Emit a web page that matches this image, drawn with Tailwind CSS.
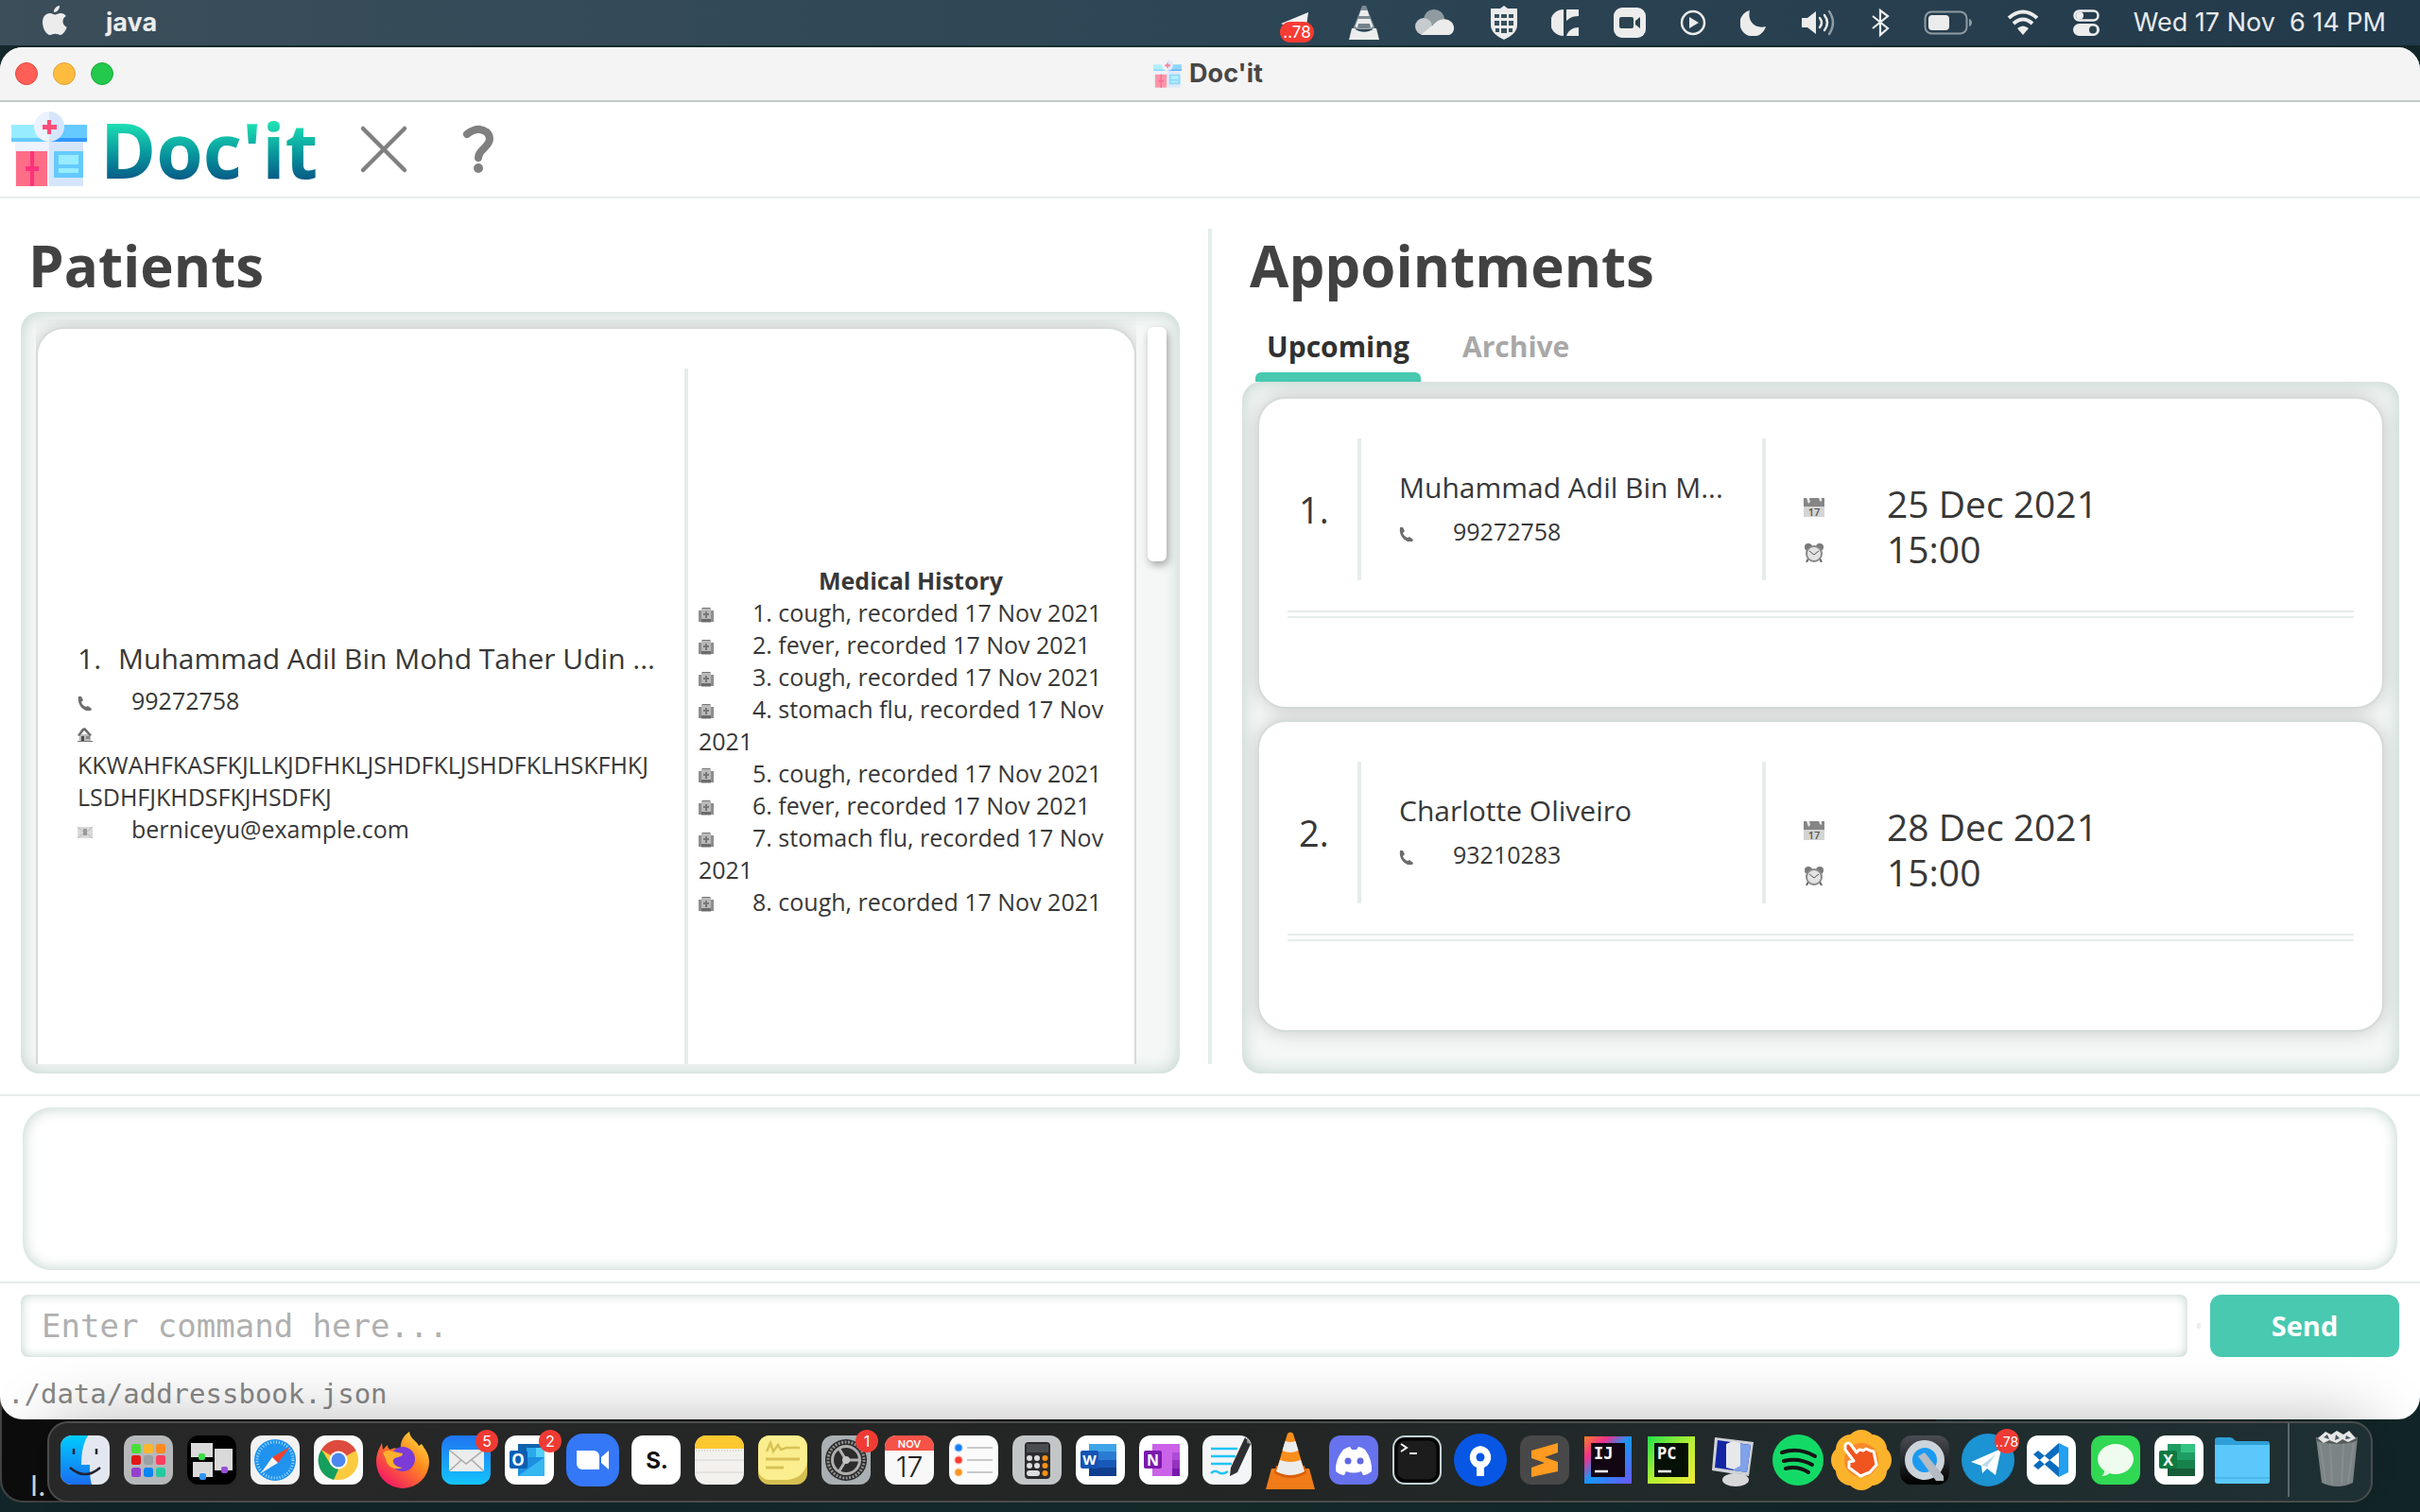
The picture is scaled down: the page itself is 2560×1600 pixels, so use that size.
<!DOCTYPE html>
<html lang="en">
<head>
<meta charset="utf-8">
<title>Doc'it</title>
<script src="https://cdn.jsdelivr.net/npm/@tailwindcss/browser@4"></script>
</head>
<body class="relative isolate flex min-h-screen flex-col overflow-x-hidden bg-linear-to-r from-[#13272a] via-[#16302f] to-[#122628] font-['Open_Sans','Noto_Sans',sans-serif] text-[#383838]">

<!-- shared glyphs -->
<svg class="hidden" aria-hidden="true">
  <symbol id="clinic" viewBox="0 0 80 80">
    <path d="M4 32h36v47H4z" fill="#ecf3fe"/><path d="M40 32h36v47H40z" fill="#d5e6fc"/>
    <path d="M0 14h40v15H0z" fill="#97edff"/><path d="M40 14h40v15H40z" fill="#65caff"/>
    <path d="M0 28h40v4H0z" fill="#65caff"/><path d="M40 28h40v4H40z" fill="#3197ff"/>
    <path d="M24 16a16 16 0 0 1 16-16v32a16 16 0 0 1-16-16z" fill="#ecf3fe"/><path d="M40 0a16 16 0 0 1 0 32z" fill="#d5e6fc"/>
    <path d="M38 9h4v5h6v5h-6v5h-4v-5h-5v-5h5z" fill="#ff4d79"/>
    <path d="M5 42h33v37H5z" fill="#ff6e86"/><path d="M20 42h4v37h-4zM15 58h14v5H15z" fill="#ff317c"/>
    <path d="M45 42h31v28H45z" fill="#65caff"/><path d="M50 46h21v10H50zM50 60h21v5H50z" fill="#97edff"/>
  </symbol>
  <symbol id="phone" viewBox="0 0 16 16"><path d="M1 1l3 0 2 4-2 2c1 3 3 4 5 5l2-1 4 3-1 2H9C3 13 0 8 1 1z" fill="#6d6d6d"/></symbol>
  <symbol id="hospital" viewBox="0 0 16 16"><path d="M0 3h3v12H0zM13 3h3v12h-3z" fill="#8e8e8e"/><path d="M3 0h10v16H3z" fill="#b9b9b9"/><path d="M4 0h8v1H4zM7 4h2v7H7zM5 6h6v2H5z" fill="#777"/><path d="M3 12h10v3H3z" fill="#6c6c6c"/></symbol>
  <symbol id="house" viewBox="0 0 16 16"><path d="M2 7h12v8H2z" fill="#bcbcbc"/><path d="M0 8l5-7 3-1 7 8-2 1-6-6-5 6z" fill="#6a6a6a"/><path d="M4 9h3v6H4z" fill="#4f4f4f"/><path d="M9 9h4v3H9z" fill="#888"/><path d="M0 14h16v1H0z" fill="#777"/></symbol>
  <symbol id="mail" viewBox="0 0 16 16"><path d="M0 3h16v12H0z" fill="#d9d9d9"/><path d="M6 5h4v7H6z" fill="#999"/><path d="M0 3l6 5M16 3l-6 5M0 15l6-5M16 15l-6-5" stroke="#bbb" fill="none"/></symbol>
  <symbol id="calendar" viewBox="0 0 22 20"><path d="M0 8h22v12H0z" fill="#d4d4d4"/><path d="M0 0h22v9H0z" fill="#858585"/><path d="M3 0h3l1 4-2 2zM16 0h3v4l-2-1z" fill="#e8e8e8"/><text x="11" y="19" text-anchor="middle" font-family="Open Sans" font-size="11" font-weight="600" fill="#555">17</text></symbol>
  <symbol id="alarm" viewBox="0 0 22 20"><path d="M5 16l-2 4M17 16l2 4" stroke="#666" stroke-width="2"/><circle cx="5" cy="4" r="4" fill="#7a7a7a"/><circle cx="17" cy="4" r="4" fill="#7a7a7a"/><circle cx="11" cy="11" r="8" fill="#e3e3e3" stroke="#8a8a8a" stroke-width="2"/><path d="M6 8l5 4 5-4" stroke="#555" fill="none"/></symbol>
</svg>

<header class="flex h-12 shrink-0 items-center bg-linear-to-r from-[#3b4e5a] via-[#2d4655] to-[#22394a] pr-9 pl-11 font-[Inter,sans-serif] text-[27px] text-white/90">
  <svg class="mb-1 h-8 w-7" viewBox="0 0 26 32" fill="#ececec"><path d="M18 0c.4 3.600-2.600 7-6 7C11.600 3.500 14.600.5 18 0zM24.800 11c-5 3-4 9.800.9 11.800C24.500 26.500 21.600 31 18.800 31c-2 0-2.800-1.200-5.300-1.200S10 31 8 31C4 31 0 24 0 17.500 0 11.500 3.800 8 7.600 8c2.400 0 4 1.400 5.600 1.400C14.700 9.400 16.500 8 19.400 8c2 0 4.200 1 5.400 3z"/></svg>
  <span class="ml-10 font-bold">java</span>
  <div class="ml-auto flex items-center gap-9">
    <svg class="h-11 w-[38px]" viewBox="0 0 38 44"><path d="M2 23L31 11l-3 22z" fill="#f2f2f2"/><rect x="1" y="21" width="36" height="22" rx="11" fill="#f83b33"/><text x="19" y="38" text-anchor="middle" font-family="Inter" font-size="17" fill="#fff">..78</text></svg>
    <svg class="h-9 w-8" viewBox="0 0 32 36"><path d="M14 0h4l10 25H4z" fill="#7d8b93"/><path d="M12.500 5h7l2 6h-11zM9.500 14h13l3 8c-5 4-14 4-19 0z" fill="#ececec"/><path d="M10 19h12l1 4c-3 2-11 2-14 0z" fill="#74838c"/><path d="M3 24h3c4 5 16 5 20 0h3l3 12H0z" fill="#ececec"/></svg>
    <svg class="h-8 w-[46px]" viewBox="0 0 46 32"><path d="M11 14a11 11 0 0 1 22-2l2 6H14z" fill="#8f9ba1"/><circle cx="11" cy="20" r="9" fill="#c5cbce"/><path d="M8 29l18-15c10-5 18 2 17 9-1 4-3 6-7 6z" fill="#ececec"/></svg>
    <svg class="h-9 w-7" viewBox="0 0 28 36"><path d="M14 0l4 3h10v17c0 8-6 12-14 16C6 32 0 28 0 20V3h10z" fill="#ececec"/><path d="M4 9h5v4H4zM11 9h6v4h-6zM19 9h5v4h-5zM4 16h5v5H4zM11 16h6v5h-6zM19 16h5v5h-5zM5 24h4v4H5zM11 24h6v5h-6zM19 24h4v4h-4z" fill="#36505d"/></svg>
    <svg class="h-8 w-[30px]" viewBox="0 0 30 32" fill="#ececec"><path d="M13 2v28A14 14 0 0 1 13 2zM16 2h13v7c-8 0-10 3-13 5zM29 30H16c2-6 7-9 13-9z"/></svg>
    <svg class="h-8 w-[34px]" viewBox="0 0 34 32"><rect width="34" height="32" rx="9" fill="#ececec"/><rect x="6" y="10" width="15" height="12" rx="2" fill="#2b4450"/><path d="M23 14l5-4v12l-5-4z" fill="#2b4450"/></svg>
    <svg class="h-8 w-7" viewBox="0 0 28 32"><circle cx="14" cy="16" r="12" fill="none" stroke="#ececec" stroke-width="2.500"/><path d="M10 10l10 6-10 6z" fill="#ececec"/></svg>
    <svg class="h-7 w-7" viewBox="0 0 28 28"><path d="M10 1c-3 12 6 20 17 17A14 14 0 1 1 10 1z" fill="#ececec"/></svg>
    <svg class="h-7 w-[38px]" viewBox="0 0 38 28"><path d="M1 9h6l9-7v24l-9-7H1z" fill="#ececec"/><path d="M20 9q4 5 0 10M25 6q6 8 0 16" fill="none" stroke="#ececec" stroke-width="2.500" stroke-linecap="round"/><path d="M30 2q8 12 0 24" fill="none" stroke="#8f9ba1" stroke-width="2.500" stroke-linecap="round"/></svg>
    <svg class="h-8 w-5" viewBox="0 0 20 32"><path d="M2 9l16 13-8 7V3l8 6L2 22" fill="none" stroke="#ececec" stroke-width="2.200"/></svg>
    <svg class="h-7 w-[52px]" viewBox="0 0 52 28"><rect x="1.500" y="2.500" width="44" height="23" rx="7" fill="none" stroke="#8f9ba1" stroke-width="2"/><rect x="5" y="6" width="22" height="16" rx="4" fill="#ececec"/><path d="M48 10c4 1 4 7 0 8z" fill="#8f9ba1"/></svg>
    <svg class="h-7 w-[34px]" viewBox="0 0 34 28"><path d="M2 9q15-13 30 0M7 15q10-9 20 0" fill="none" stroke="#ececec" stroke-width="4"/><path d="M11 20q6-5 12 0l-6 7z" fill="#ececec"/></svg>
    <svg class="h-7 w-7" viewBox="0 0 28 28"><rect x="1.500" y="1.500" width="25" height="10" rx="5" fill="none" stroke="#ececec" stroke-width="2.500"/><circle cx="7" cy="6.500" r="4" fill="#ececec"/><rect y="15" width="28" height="13" rx="6.500" fill="#ececec"/><circle cx="21" cy="21.500" r="4" fill="#2b4450"/></svg>
    <time class="whitespace-pre">Wed 17 Nov  6 14 PM</time>
  </div>
</header>

<main class="mt-0.5 flex flex-1 flex-col overflow-hidden rounded-[24px] bg-white">
  <div class="relative flex h-[58px] shrink-0 items-center border-b-2 border-[#c3cac9] bg-[#f4f4f4] pl-4">
    <div class="flex gap-4">
      <button aria-label="Close" class="size-6 rounded-full border border-[#e2463f] bg-[#ff5f57]"></button>
      <button aria-label="Minimise" class="size-6 rounded-full border border-[#e0a033] bg-[#febc3f]"></button>
      <button aria-label="Zoom" class="size-6 rounded-full border border-[#1bab3c] bg-[#22c94c]"></button>
    </div>
    <div class="absolute inset-0 flex items-center justify-center gap-2 pr-1 font-[Inter,sans-serif] text-[27px] font-bold text-[#474747]">
      <svg class="size-[30px] opacity-70"><use href="#clinic"/></svg>
      <h1>Doc'it</h1>
    </div>
  </div>

  <nav class="flex h-[102px] shrink-0 items-center border-b-2 border-[#e5edeb] pl-3">
    <svg class="size-20"><use href="#clinic"/></svg>
    <span class="ml-[14px] bg-linear-to-b from-[#20e6b4] from-20% to-[#0a5584] to-85% bg-clip-text text-[80px] leading-[100px] font-bold text-transparent">Doc'it</span>
    <button aria-label="Exit" class="ml-10"><svg class="size-[60px]" viewBox="0 0 60 60"><path d="M8 8l44 44M52 8L8 52" stroke="#808080" stroke-width="4.500" stroke-linecap="round"/></svg></button>
    <button aria-label="Help" class="ml-10"><svg class="size-[60px]" viewBox="0 0 60 60"><path d="M18 14q12-9 21-2c7 8 0 14-5 19q-4 4-4 8" fill="none" stroke="#808080" stroke-width="8" stroke-linecap="round"/><circle cx="30" cy="50" r="5" fill="#808080"/></svg></button>
  </nav>

  <div class="grid min-h-0 flex-1 grid-cols-[1fr_4px_1fr] border-b-2 border-[#e5edeb]">
    <section class="flex min-h-0 flex-col pt-8 pr-[30px] pb-[22px] pl-[22px]">
      <h2 class="h-[88px] pl-2 text-[60px] leading-[78px] font-bold text-[#424242]">Patients</h2>
      <div class="relative flex min-h-0 flex-1 gap-3 rounded-[20px] bg-[#f4f7f6] px-4 py-2 pr-[14px] shadow-[inset_0_0_18px_#bdd0ca]">
        <div class="h-[788px] flex-1 overflow-hidden pt-2">
          <article class="flex min-h-[876px] rounded-[30px] border-2 border-[#d5dbd9] bg-white pt-[42px] pr-3 pb-[42px] pl-[42px] shadow-[0_0_20px_#00000030]">
            <div class="flex w-[646px] flex-col justify-center border-r-4 border-[#e5edeb] pr-7 pb-1 text-[25px] leading-[34px]">
              <h3 class="flex gap-[18px] text-[30px] leading-[54px]"><span>1.</span><span class="whitespace-nowrap">Muhammad Adil Bin Mohd Taher Udin ...</span></h3>
              <p><svg class="mr-[41px] inline size-4"><use href="#phone"/></svg>99272758</p>
              <p class="break-words"><svg class="mr-9 inline size-4"><use href="#house"/></svg> KKWAHFKASFKJLLKJDFHKLJSHDFKLJSHDFKLHSKFHKJLSDHFJKHDSFKJHSDFKJ</p>
              <p><svg class="mr-[41px] inline size-4"><use href="#mail"/></svg>berniceyu@example.com</p>
            </div>
            <div class="flex flex-1 flex-col justify-center pl-[11px] text-[25px] leading-[34px]">
              <h4 class="text-center font-bold">Medical History</h4>
              <p><svg class="mr-[41px] inline size-4"><use href="#hospital"/></svg>1. cough, recorded 17 Nov 2021</p>
              <p><svg class="mr-[41px] inline size-4"><use href="#hospital"/></svg>2. fever, recorded 17 Nov 2021</p>
              <p><svg class="mr-[41px] inline size-4"><use href="#hospital"/></svg>3. cough, recorded 17 Nov 2021</p>
              <p><svg class="mr-[41px] inline size-4"><use href="#hospital"/></svg>4. stomach flu, recorded 17 Nov 2021</p>
              <p><svg class="mr-[41px] inline size-4"><use href="#hospital"/></svg>5. cough, recorded 17 Nov 2021</p>
              <p><svg class="mr-[41px] inline size-4"><use href="#hospital"/></svg>6. fever, recorded 17 Nov 2021</p>
              <p><svg class="mr-[41px] inline size-4"><use href="#hospital"/></svg>7. stomach flu, recorded 17 Nov 2021</p>
              <p><svg class="mr-[41px] inline size-4"><use href="#hospital"/></svg>8. cough, recorded 17 Nov 2021</p>
            </div>
          </article>
        </div>
        <div class="mt-2 h-[248px] w-5 rounded-md bg-white shadow-[2px_4px_8px_#00000055]"></div>
      </div>
    </section>

    <div class="my-8 bg-[#e5edeb]"></div>

    <section class="flex min-h-0 flex-col pt-8 pr-[22px] pb-[22px] pl-8">
      <h2 class="h-20 pl-2 text-[60px] leading-[78px] font-bold text-[#424242]">Appointments</h2>
      <div role="tablist" class="flex h-[82px] items-end pl-[14px] text-[30px] leading-10 font-bold">
        <button role="tab" aria-selected="true" class="px-3 text-[#303030] after:-mx-3 after:mt-[7px] after:block after:h-[10px] after:rounded-t-md after:bg-[#48c9b0]">Upcoming</button>
        <button role="tab" aria-selected="false" class="ml-8 px-3 text-[#a8a8a8] after:mt-[7px] after:block after:h-[10px]">Archive</button>
      </div>
      <div class="flex min-h-0 flex-1 flex-col gap-3 rounded-[20px] bg-[#f4f7f6] px-4 pt-4 shadow-[inset_0_0_20px_#bdd0ca]">
        <article class="h-[330px] rounded-[30px] border-2 border-[#d5dbd9] bg-white px-[30px] pt-[42px] shadow-[0_0_20px_#00000030]">
          <div class="flex h-[150px] items-center">
            <div class="w-[74px] pl-3 text-[38px]">1.</div>
            <div class="flex h-full w-[432px] flex-col justify-center border-x-4 border-[#e5edeb] pb-1.5 pl-10">
              <h3 class="truncate pr-6 text-[30px] leading-[52px]">Muhammad Adil Bin M...</h3>
              <p class="text-[25px] leading-10"><svg class="mr-[41px] inline size-4"><use href="#phone"/></svg>99272758</p>
            </div>
            <div class="mt-9 pl-10 text-[39px] leading-[48px]">
              <p class="flex items-center"><svg class="mt-2 mr-[66px] h-5 w-[22px]"><use href="#calendar"/></svg>25 Dec 2021</p>
              <p class="flex items-center"><svg class="mt-2 mr-[66px] h-5 w-[22px]"><use href="#alarm"/></svg>15:00</p>
            </div>
          </div>
          <div class="mt-8 h-2 border-y-2 border-[#e5edeb]"></div>
        </article>
        <article class="h-[330px] rounded-[30px] border-2 border-[#d5dbd9] bg-white px-[30px] pt-[42px] shadow-[0_0_20px_#00000030]">
          <div class="flex h-[150px] items-center">
            <div class="w-[74px] pl-3 text-[38px]">2.</div>
            <div class="flex h-full w-[432px] flex-col justify-center border-x-4 border-[#e5edeb] pb-1.5 pl-10">
              <h3 class="truncate pr-6 text-[30px] leading-[52px]">Charlotte Oliveiro</h3>
              <p class="text-[25px] leading-10"><svg class="mr-[41px] inline size-4"><use href="#phone"/></svg>93210283</p>
            </div>
            <div class="mt-9 pl-10 text-[39px] leading-[48px]">
              <p class="flex items-center"><svg class="mt-2 mr-[66px] h-5 w-[22px]"><use href="#calendar"/></svg>28 Dec 2021</p>
              <p class="flex items-center"><svg class="mt-2 mr-[66px] h-5 w-[22px]"><use href="#alarm"/></svg>15:00</p>
            </div>
          </div>
          <div class="mt-8 h-2 border-y-2 border-[#e5edeb]"></div>
        </article>
      </div>
    </section>
  </div>

  <div class="border-b-2 border-[#e5edeb] px-6 py-3">
    <textarea readonly aria-label="Result" class="block h-[172px] w-full resize-none rounded-[30px] shadow-[inset_0_0_16px_#bdd0ca]"></textarea>
  </div>
  <form class="flex h-[90px] shrink-0 items-center px-[22px]">
    <input aria-label="Command" placeholder="Enter command here..." class="h-[66px] flex-1 rounded-lg px-[22px] font-['DejaVu_Sans_Mono',monospace] text-[34px] shadow-[inset_0_0_12px_#bdd0ca] placeholder:text-[#b0b0b0]">
    <span class="mx-[10px] h-1.5 w-1 bg-[#ebefee]"></span>
    <button type="button" class="h-[66px] w-[200px] rounded-xl bg-[#48c9b0] text-[29px] font-bold text-white">Send</button>
  </form>
  <footer class="h-[54px] shrink-0 pl-2 font-['DejaVu_Sans_Mono',monospace] text-[29px] leading-[54px] text-[#888]">./data/addressbook.json</footer>
</main>

<div class="relative mt-0.5 mb-2.5 shrink-0 px-[50px]">
  <div class="absolute -top-8 bottom-0 left-0 -z-10 w-4/5 rounded-bl-[24px] border-b-2 border-l-2 border-[#444] bg-[#0d0d0d] pt-[82px] pl-[30px] font-[Inter,sans-serif] text-[30px] leading-[36px] text-[#ddd]">I.</div>
  <nav aria-label="Dock" class="flex h-[86px] items-center rounded-[22px] border-2 border-[#4a4c4b] bg-linear-to-r from-[#282828] via-[#232524] to-[#1e3033] pb-1 pl-2 shadow-[0_0_70px_#00000048]">
    <div class="flex flex-1 items-center justify-between">
      <!-- Finder -->
      <svg class="h-[72px] w-[60px] overflow-visible" viewBox="0 0 60 72"><defs><linearGradient id="fb" x2="0" y2="1"><stop stop-color="#0cf"/><stop offset="1" stop-color="#1a6df0"/></linearGradient></defs><rect x="4" y="10" width="52" height="52" rx="12" fill="#e3e8f0"/><path d="M33 10H16A12 12 0 0 0 4 22v28a12 12 0 0 0 12 12h21c-2-6-2-14-2-21h-9c0-12 2-23 7-31z" fill="url(#fb)"/><path d="M18 24v6M42 24v6" stroke="#223" stroke-width="2.500"/><path d="M14 44q16 14 32 0" fill="none" stroke="#223" stroke-width="2.500"/></svg>
      <!-- Launchpad -->
      <svg class="h-[72px] w-[60px]" viewBox="0 0 60 72"><rect x="4" y="10" width="52" height="52" rx="12" fill="#b6b8ba"/><g><rect x="12" y="19" width="10" height="10" rx="2.500" fill="#4ade3a"/><rect x="25" y="19" width="10" height="10" rx="2.500" fill="#fdb52c"/><rect x="38" y="19" width="10" height="10" rx="2.500" fill="#fc8a1e"/><rect x="12" y="31" width="10" height="10" rx="2.500" fill="#e01818"/><rect x="25" y="31" width="10" height="10" rx="2.500" fill="#9aa0a4"/><rect x="38" y="31" width="10" height="10" rx="2.500" fill="#fb3d60"/><rect x="12" y="44" width="10" height="10" rx="2.500" fill="#9440cf"/><rect x="25" y="44" width="10" height="10" rx="2.500" fill="#0b86f5"/><rect x="38" y="44" width="10" height="10" rx="2.500" fill="#25c9a0"/></g></svg>
      <!-- Mission control -->
      <svg class="h-[72px] w-[60px]" viewBox="0 0 60 72"><rect x="4" y="10" width="52" height="52" rx="12" fill="#000"/><path d="M8 18h23v15H8zM33 24h19v23H33zM10 38h21v16H10z" fill="#dadada"/><rect x="16" y="29" width="7" height="7" rx="2" fill="#3bdc4b"/><rect x="17" y="50" width="7" height="7" rx="2" fill="#2d94f5"/><rect x="40" y="43" width="7" height="7" rx="2" fill="#9a4fd8"/></svg>
      <!-- Safari -->
      <svg class="h-[72px] w-[60px]" viewBox="0 0 60 72"><rect x="4" y="10" width="52" height="52" rx="12" fill="#f2f2f2"/><circle cx="30" cy="36" r="22" fill="#1f93ee"/><circle cx="30" cy="36" r="19" fill="none" stroke="#a8dcff" stroke-width="3" stroke-dasharray="1 2"/><path d="M46 22L33 39l-6-6z" fill="#f1412e"/><path d="M15 50l12-17 6 6z" fill="#f4f4f4"/></svg>
      <!-- Chrome -->
      <svg class="h-[72px] w-[60px]" viewBox="0 0 60 72"><rect x="4" y="10" width="52" height="52" rx="12" fill="#fbfbfb"/><circle cx="30" cy="36" r="21" fill="#fcca3e"/><path d="M30 36L12 25a21 21 0 0 1 36.500 1z" fill="#dd4b3e"/><path d="M12 25l10 16 8 5-5 11A21 21 0 0 1 12 25z" fill="#159f5c"/><path d="M30 26h18.500" stroke="#dd4b3e"/><circle cx="30" cy="36" r="9.500" fill="#fff"/><circle cx="30" cy="36" r="7.500" fill="#4a87ee"/></svg>
      <!-- Firefox -->
      <svg class="h-[72px] w-[60px]" viewBox="0 0 60 72"><defs><linearGradient id="ff" x1="1" x2=".2" y2="1"><stop stop-color="#fff04d"/><stop offset=".45" stop-color="#ff8a1e"/><stop offset="1" stop-color="#f2106a"/></linearGradient></defs><path d="M2 38c0-9 3-14 6-20l1 7 5-5c0 3 1 4 3 5 3-2 7-2 11 0-1-9 3-15 9-19 1 7 6 9 9 13l1 2 3-2c4 6 8 11 8 19A28 28 0 0 1 2 38z" fill="url(#ff)"/><circle cx="30" cy="35" r="13" fill="#7a3bd6"/><path d="M9 28c6-4 12 0 21 1 0 5-9 3-10 7s4 8 10 8c-9 4-17-2-18-9z" fill="#ffb02e"/></svg>
      <!-- Mail -->
      <svg class="h-[72px] w-[60px] overflow-visible" viewBox="0 0 60 72"><defs><linearGradient id="ml" x2="0" y2="1"><stop stop-color="#1f74f2"/><stop offset="1" stop-color="#14c4fb"/></linearGradient></defs><rect x="4" y="10" width="52" height="52" rx="12" fill="url(#ml)"/><rect x="12" y="25" width="37" height="23" rx="2" fill="#ececec"/><path d="M13 26l17 14 18-14M13 47l12-11M48 47L36 36" fill="none" stroke="#aaa" stroke-width="1.500"/><circle cx="52" cy="16" r="12" fill="#ef3b34"/><text x="52" y="22" text-anchor="middle" font-family="Inter" font-size="16" fill="#fff">5</text></svg>
      <!-- Outlook -->
      <svg class="h-[72px] w-[60px] overflow-visible" viewBox="0 0 60 72"><rect x="4" y="10" width="52" height="52" rx="12" fill="#fff"/><path d="M18 19h28v34H18z" fill="#1b8fe0"/><path d="M18 19h28v8H18z" fill="#0f62ab"/><path d="M27 23h10v10H27z" fill="#2ba9ee"/><path d="M37 23h9v10h-9z" fill="#50d0fb"/><path d="M18 53l28-20v20z" fill="#35b7f1"/><rect x="9" y="26" width="19" height="19" rx="2" fill="#0a5fb4"/><text x="18" y="42" text-anchor="middle" font-family="Open Sans" font-weight="700" font-size="17" fill="#fff">O</text><circle cx="52" cy="16" r="12" fill="#ef3b34"/><text x="52" y="22" text-anchor="middle" font-family="Inter" font-size="16" fill="#fff">2</text></svg>
      <!-- Zoom -->
      <svg class="h-[72px] w-[60px]" viewBox="0 0 60 72"><rect x="2" y="8" width="56" height="56" rx="18" fill="#3478f8"/><path d="M13 26h18a6 6 0 0 1 6 6v14H19a6 6 0 0 1-6-6zM39 33l8-7v20l-8-7z" fill="#fff"/></svg>
      <!-- S. -->
      <svg class="h-[72px] w-[60px]" viewBox="0 0 60 72"><rect x="4" y="10" width="52" height="52" rx="12" fill="#fff"/><text x="31" y="45" text-anchor="middle" font-family="Inter" font-weight="700" font-size="24" fill="#111">S.</text></svg>
      <!-- Notes -->
      <svg class="h-[72px] w-[60px]" viewBox="0 0 60 72"><rect x="4" y="10" width="52" height="52" rx="12" fill="#f3f1ee"/><path d="M4 24v-2a12 12 0 0 1 12-12h28a12 12 0 0 1 12 12v2z" fill="#fcc82f"/><path d="M4 36h52M4 49h52" stroke="#d4d4d4"/><path d="M5 26h50" stroke="#bbb" stroke-dasharray="1 2"/></svg>
      <!-- Stickies -->
      <svg class="h-[72px] w-[60px]" viewBox="0 0 60 72"><rect x="4" y="10" width="52" height="52" rx="12" fill="#d6bf51"/><path d="M16 10h28a12 12 0 0 1 12 12v16C54 50 46 56 34 57H16A12 12 0 0 1 4 45V22a12 12 0 0 1 12-12z" fill="#fbee8e"/><path d="M13 27l4-9 3 9 5-7 3 5 6-2h14" fill="none" stroke="#d8c254" stroke-width="2.500"/><path d="M12 35h36M12 44h19" stroke="#d8c254" stroke-width="3"/></svg>
      <!-- Settings -->
      <svg class="h-[72px] w-[60px] overflow-visible" viewBox="0 0 60 72"><rect x="4" y="10" width="52" height="52" rx="12" fill="#a9b0b3"/><circle cx="30" cy="36" r="22" fill="#2c2c2c"/><circle cx="30" cy="36" r="19" fill="none" stroke="#909090" stroke-width="3" stroke-dasharray="2 1.500"/><circle cx="30" cy="36" r="14.500" fill="none" stroke="#b0b0b0" stroke-width="3"/><path d="M30 36h15M30 36l-8-13M30 36l-8 13" stroke="#b0b0b0" stroke-width="3"/><circle cx="30" cy="36" r="4" fill="#c4c4c4"/><circle cx="52" cy="16" r="12" fill="#ef3b34"/><text x="52" y="22" text-anchor="middle" font-family="Inter" font-size="16" fill="#fff">1</text></svg>
      <!-- Calendar -->
      <svg class="h-[72px] w-[60px]" viewBox="0 0 60 72"><rect x="4" y="10" width="52" height="52" rx="12" fill="#f8f8f8"/><path d="M4 26v-4a12 12 0 0 1 12-12h28a12 12 0 0 1 12 12v4z" fill="#f55248"/><text x="30" y="22.500" text-anchor="middle" font-family="Inter" font-weight="600" font-size="11" fill="#fff">NOV</text><text x="30" y="54" text-anchor="middle" font-family="Inter" font-weight="300" font-size="30" fill="#222">17</text></svg>
      <!-- Reminders -->
      <svg class="h-[72px] w-[60px]" viewBox="0 0 60 72"><rect x="4" y="10" width="52" height="52" rx="12" fill="#fbfbfb"/><path d="M23 23h27M23 36h27M23 49h27" stroke="#c9c9cc" stroke-width="2"/><circle cx="14" cy="23" r="3.500" fill="#157efb" stroke="#157efb55" stroke-width="2.500"/><circle cx="14" cy="36" r="3.500" fill="#fc3d33" stroke="#fc3d3355" stroke-width="2.500"/><circle cx="14" cy="49" r="3.500" fill="#fd9527" stroke="#fd952755" stroke-width="2.500"/></svg>
      <!-- Calculator -->
      <svg class="h-[72px] w-[60px]" viewBox="0 0 60 72"><rect x="4" y="10" width="52" height="52" rx="12" fill="#c3c6c6"/><rect x="17" y="17" width="27" height="39" rx="4" fill="#2b2b2d"/><path d="M19 19h23v9H19z" fill="#4a4d50"/><g fill="#ddd"><circle cx="22" cy="34" r="3"/><circle cx="30" cy="34" r="3"/><circle cx="22" cy="42" r="3"/><circle cx="30" cy="42" r="3"/><rect x="19" y="47" width="14" height="6" rx="3"/></g><g fill="#fc9112"><circle cx="38.500" cy="34" r="3"/><circle cx="38.500" cy="42" r="3"/><circle cx="38.500" cy="50" r="3"/></g></svg>
      <!-- Word -->
      <svg class="h-[72px] w-[60px]" viewBox="0 0 60 72"><rect x="4" y="10" width="52" height="52" rx="12" fill="#fff"/><path d="M18 19h29v9H18z" fill="#3fa4ea"/><path d="M18 27h29v9H18z" fill="#2a7bd3"/><path d="M18 36h29v9H18z" fill="#1858b8"/><path d="M18 44h29v9H18z" fill="#103f8f"/><rect x="9" y="26" width="19" height="19" rx="2" fill="#1554b4"/><text x="18.500" y="41" text-anchor="middle" font-family="Open Sans" font-weight="700" font-size="15" fill="#fff">W</text></svg>
      <!-- OneNote -->
      <svg class="h-[72px] w-[60px]" viewBox="0 0 60 72"><rect x="4" y="10" width="52" height="52" rx="12" fill="#fff"/><path d="M18 19h29v34H18z" fill="#ca63e8"/><path d="M39 28h8v8h-8z" fill="#ae4bd5"/><path d="M39 36h8v9h-8z" fill="#9333be"/><path d="M39 45h8v8h-8z" fill="#7719aa"/><rect x="9" y="26" width="19" height="19" rx="2" fill="#7a19ac"/><text x="18.500" y="41.500" text-anchor="middle" font-family="Open Sans" font-weight="700" font-size="16" fill="#fff">N</text></svg>
      <!-- GoodNotes -->
      <svg class="h-[72px] w-[60px]" viewBox="0 0 60 72"><rect x="4" y="10" width="52" height="52" rx="12" fill="#f4f5f6"/><path d="M13 24h28M13 32h26M13 40h22" stroke="#20c4f4" stroke-width="2.500"/><path d="M13 50q4-4 8-1t10-1" fill="none" stroke="#20c4f4" stroke-width="2.500"/><path d="M49 12l6 7-14 30-8 4 1-9z" fill="#2d2f32"/><path d="M51 12l4 7-4-1z" fill="#888"/></svg>
      <!-- VLC -->
      <svg class="h-[72px] w-[60px]" viewBox="0 0 60 72"><path d="M10 45h40l6 22H4z" fill="#f07b18"/><path d="M13 50q17 10 34 0l-2-8H15z" fill="#d85f0a"/><path d="M27 8q3-3 6 0l12 40q-15 8-30 0z" fill="#f88e1c"/><path d="M24.500 16q5.500 2 11 0l3 10q-9 4-17 0zM19 36q11 4 22 0l4 12q-15 8-30 0z" fill="#ececec"/></svg>
      <!-- Discord -->
      <svg class="h-[72px] w-[60px]" viewBox="0 0 60 72"><rect x="4" y="10" width="52" height="52" rx="12" fill="#6772ee"/><path d="M19 25q5-3 7-3l2 3h5l2-3q3 0 7 3 8 11 7 23-5 4-9 4l-2-4q-8 3-16 0l-2 4q-4 0-9-4-1-12 8-23z" fill="#fff"/><circle cx="24" cy="37" r="3.500" fill="#6068e4"/><circle cx="37" cy="37" r="3.500" fill="#6068e4"/></svg>
      <!-- Terminal -->
      <svg class="h-[72px] w-[60px]" viewBox="0 0 60 72"><rect x="5" y="11" width="50" height="50" rx="12" fill="#0a0a0a" stroke="#c4d2d6" stroke-width="2"/><rect x="8.500" y="14.500" width="43" height="43" rx="9" fill="#1c1c1c" stroke="#000" stroke-width="2"/><path d="M13 19l6 4-6 4M22 29h8" fill="none" stroke="#fff" stroke-width="2"/></svg>
      <!-- Sourcetree -->
      <svg class="h-[72px] w-[60px]" viewBox="0 0 60 72"><circle cx="30" cy="36" r="28" fill="#0757e4"/><path d="M30 21a12 12 0 0 1 4 23v9h-8v-9a12 12 0 0 1 4-23z" fill="#fff"/><circle cx="30" cy="33" r="4.500" fill="#0757e4"/></svg>
      <!-- Sublime -->
      <svg class="h-[72px] w-[60px]" viewBox="0 0 60 72"><rect x="4" y="10" width="52" height="52" rx="12" fill="#484848"/><path d="M44 18v10l-14 5 14 5v10l-28 6V44l14-5-14-5V26z" fill="#ff9b20"/></svg>
      <!-- IntelliJ -->
      <svg class="h-[72px] w-[60px]" viewBox="0 0 60 72"><defs><linearGradient id="ij" y2="1"><stop stop-color="#fd8024"/><stop offset=".25" stop-color="#f0308c"/><stop offset=".5" stop-color="#1597fb"/><stop offset="1" stop-color="#6b57f5"/></linearGradient></defs><rect x="5" y="11" width="50" height="50" fill="url(#ij)"/><rect x="12" y="18" width="36" height="36" fill="#120612"/><text x="15" y="35" font-family="DejaVu Sans Mono" font-weight="700" font-size="17" fill="#fff">IJ</text><path d="M16 48h14" stroke="#fff" stroke-width="2.500"/></svg>
      <!-- PyCharm -->
      <svg class="h-[72px] w-[60px]" viewBox="0 0 60 72"><defs><linearGradient id="pc" y2="1"><stop stop-color="#21e04a"/><stop offset=".5" stop-color="#b4ef34"/><stop offset="1" stop-color="#f2ea38"/></linearGradient></defs><rect x="5" y="11" width="50" height="50" fill="url(#pc)"/><rect x="12" y="18" width="36" height="36" fill="#071007"/><text x="15" y="35" font-family="DejaVu Sans Mono" font-weight="700" font-size="17" fill="#fff">PC</text><path d="M16 48h14" stroke="#fff" stroke-width="2.500"/></svg>
      <!-- Remote desktop -->
      <svg class="h-[72px] w-[60px]" viewBox="0 0 60 72"><path d="M9 12l41 5-5 36-39-6z" fill="#cfd2d6"/><path d="M12 15l35 5-4 29-34-5z" fill="#1226a4"/><path d="M30 18l17 2-4 29-14-2z" fill="#7fa2ea"/><path d="M21 19l7-3 8 2v24l-7 4-8-2z" fill="#e6e8ea"/><path d="M27 50h10l-1 6h-8z" fill="#aaa"/><ellipse cx="31" cy="57" rx="14" ry="7" fill="#d8d8d8"/></svg>
      <!-- Spotify -->
      <svg class="h-[72px] w-[60px]" viewBox="0 0 60 72"><circle cx="30" cy="36" r="27" fill="#13da67"/><path d="M13 28q18-6 35 4M15 37q16-4 30 4M17 45q13-3 24 4" fill="none" stroke="#151515" stroke-width="4" stroke-linecap="round"/></svg>
      <!-- Clicker -->
      <svg class="h-[72px] w-[60px] overflow-visible" viewBox="0 0 60 72"><g fill="#fcb32c"><circle cx="30" cy="20" r="16"/><circle cx="30" cy="52" r="16"/><circle cx="14" cy="36" r="16"/><circle cx="46" cy="36" r="16"/><circle cx="19" cy="25" r="16"/><circle cx="41" cy="25" r="16"/><circle cx="19" cy="47" r="16"/><circle cx="41" cy="47" r="16"/></g><circle cx="30" cy="36" r="18" fill="#f78a2c"/><path d="M13 20q3-4 6 0l6 8 3-3 4 1 3-2 4 2 4 1 3 14-7 8-10 4-12-9v-6l5-1-9-12z" fill="#f0541f" stroke="#fff" stroke-width="3" stroke-linejoin="round"/></svg>
      <!-- QuickTime -->
      <svg class="h-[72px] w-[60px]" viewBox="0 0 60 72"><defs><linearGradient id="qt" x2="0" y2="1"><stop stop-color="#4a4d53"/><stop offset="1" stop-color="#000"/></linearGradient></defs><rect x="4" y="10" width="52" height="52" rx="12" fill="url(#qt)"/><circle cx="30" cy="36" r="17" fill="#1b9af2" stroke="#ccd3da" stroke-width="8"/><path d="M23 32l7-4 20 25v5h-8z" fill="#b4bbc2"/></svg>
      <!-- Telegram -->
      <svg class="h-[72px] w-[60px] overflow-visible" viewBox="0 0 60 72"><circle cx="30" cy="36" r="28" fill="#1c93d2"/><path d="M12 38l32-14-6 28-9-7-5 5-1-8z" fill="#fff"/><path d="M23 42l15-12-9 13z" fill="#b9d9ee"/><circle cx="50" cy="16" r="13" fill="#ef3b34"/><text x="50" y="21.500" text-anchor="middle" font-family="Inter" font-size="14" fill="#fff">..78</text></svg>
      <!-- VS Code -->
      <svg class="h-[72px] w-[60px]" viewBox="0 0 60 72"><rect x="4" y="10" width="52" height="52" rx="12" fill="#fff"/><path d="M38 18v10L16 46l-5-4zM38 54V44L16 26l-5 4z" fill="#0a6cbd"/><path d="M38 18l10 5v26l-10 5z" fill="#22a0f2"/></svg>
      <!-- Messages -->
      <svg class="h-[72px] w-[60px]" viewBox="0 0 60 72"><rect x="4" y="10" width="52" height="52" rx="12" fill="#30d853"/><ellipse cx="30" cy="35" rx="19" ry="16" fill="#effbef"/><path d="M18 45q1 5-3 8 6 0 10-4z" fill="#dff5df"/></svg>
      <!-- Excel -->
      <svg class="h-[72px] w-[60px]" viewBox="0 0 60 72"><rect x="4" y="10" width="52" height="52" rx="12" fill="#fff"/><path d="M18 19h29v34H18z" fill="#1f9c63"/><path d="M32 19h15v9H32z" fill="#33c481"/><path d="M18 36h29v17H18z" fill="#17814b"/><path d="M18 45h29v8H18z" fill="#185c37"/><rect x="9" y="26" width="19" height="19" rx="2" fill="#0f7a41"/><text x="18.500" y="41.500" text-anchor="middle" font-family="Open Sans" font-weight="700" font-size="16" fill="#fff">X</text></svg>
      <!-- Folder -->
      <svg class="h-[72px] w-[60px]" viewBox="0 0 60 72"><path d="M1 15q0-3 3-3h13q3 0 5 3 1 1 3 1h31q3 0 3 3v10H1z" fill="#2e9fd6"/><path d="M1 20h58v38q0 3-3 3H4q-3 0-3-3z" fill="#5ac8fb"/><path d="M1 55h58" stroke="#3daade"/></svg>
    </div>
    <div class="ml-[18px] h-[78px] w-0.5 bg-[#5c6b6c]"></div>
    <!-- Trash -->
    <svg class="mr-2 ml-[18px] h-[72px] w-[60px]" viewBox="0 0 60 72"><path d="M10 12l44 0-5 48q-16 8-33 0z" fill="#7c8384"/><path d="M14 16l6 44M25 18l2 44M39 18l-2 44M50 16l-6 44" stroke="#878e8f" stroke-width="2"/><ellipse cx="32" cy="14" rx="22" ry="5" fill="#555c5e"/><path d="M12 13l8-7 6 3 6-4 7 4 6-4 7 8-8 4-6-3-6 4-8-3-6 3z" fill="#e6e6e6"/><path d="M18 12l4-3 2 5zM31 9l4 4-5 2zM42 10l5 3-6 1z" fill="#4a5560"/></svg>
  </nav>
</div>
</body>
</html>
